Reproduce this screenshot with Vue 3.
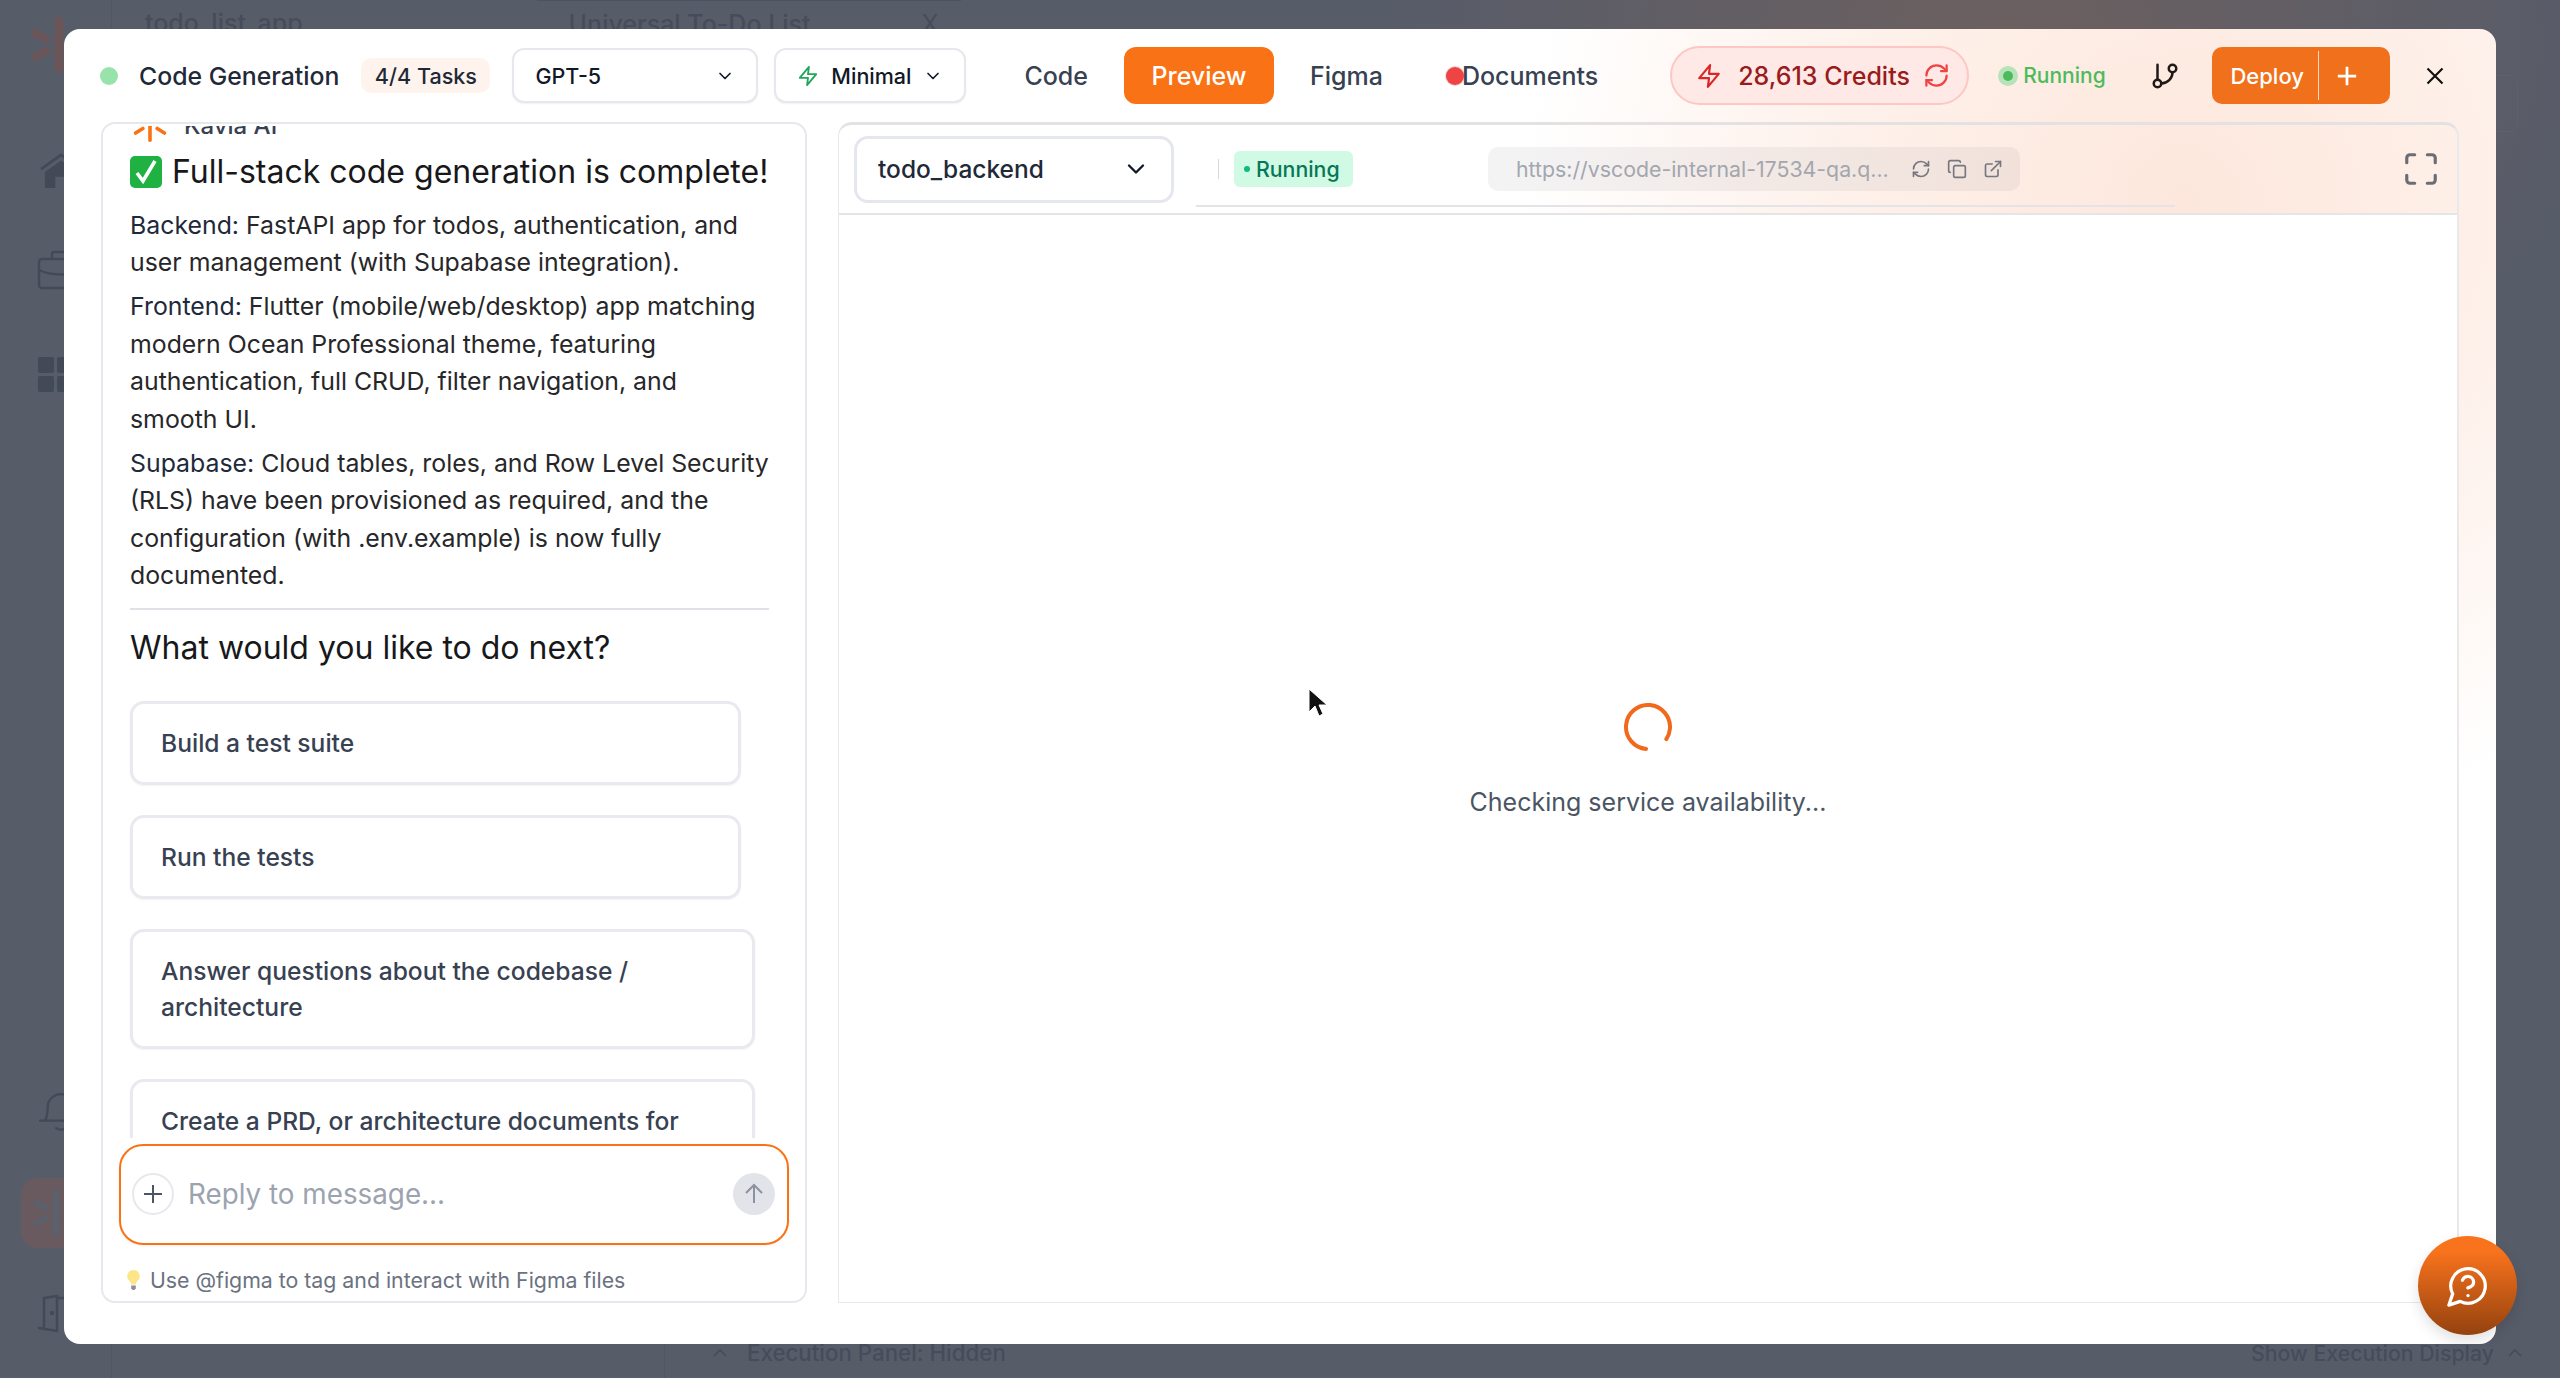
<template>
  <div class="page">
    <!-- app behind the dialog, mostly hidden -->
    <aside class="sidebar">
      <svg class="side-logo" viewBox="0 0 56 56" fill="none" stroke="#6a5659" stroke-linecap="round">
        <path d="M28 4v48" stroke-width="9" />
        <path d="M4 16l11 6M4 40l11-6M52 16l-11 6M52 40l-11-6" stroke-width="8" />
      </svg>
      <svg class="side-ico ico-home" viewBox="0 0 46 38" fill="none" stroke="#434a57" stroke-width="3">
        <path d="M2 17 23 2l21 15" />
        <path d="M6 20 23 8l17 12v15a2 2 0 0 1-2 2h-9V25H17v12H8a2 2 0 0 1-2-2z" fill="#434a57" stroke="none" />
      </svg>
      <svg class="side-ico ico-case" viewBox="0 0 48 40" fill="none" stroke="#434a57" stroke-width="2.5">
        <rect x="2" y="9" width="44" height="29" rx="3" />
        <path d="M15 9V4a2 2 0 0 1 2-2h14a2 2 0 0 1 2 2v5M2 20c12 6 32 6 44 0" />
      </svg>
      <div class="side-grid"><i></i><i></i><i></i><i></i></div>
      <svg class="side-ico ico-bell" viewBox="0 0 48 42" fill="none" stroke="#434a57" stroke-width="2.5" stroke-linecap="round">
        <path d="M2 29h44M7 29c3-4 3-8 3-14a14 14 0 0 1 28 0c0 6 0 10 3 14M19 37c3 2 7 2 10 0" />
      </svg>
      <div class="side-active">
        <svg viewBox="0 0 56 56" fill="none" stroke="#5a606c" stroke-linecap="round">
          <path d="M28 6v44" stroke-width="7" />
          <path d="M7 17l10 6M7 39l10-6M49 17l-10 6M49 39l-10-6" stroke-width="6" />
        </svg>
      </div>
      <svg class="side-ico ico-door" viewBox="0 0 48 40" fill="none" stroke="#434a57" stroke-width="2.5" stroke-linecap="round">
        <path d="M2 34l18 3V2L7 4v30M20 4h12v30M32 34h14" />
        <circle cx="15" cy="19" r="1" />
      </svg>
    </aside>

    <main class="behind">
      <div class="behind-top">
        <span class="behind-app">todo_list_app</span>
        <div class="behind-tab">
          <span>Universal To-Do List</span>
          <span class="behind-x">X</span>
        </div>
        <div class="behind-ghost"></div>
      </div>
      <div class="behind-bottom">
        <div class="exec-left">
          <svg class="caret" viewBox="0 0 14 8" fill="none" stroke="#454b58" stroke-width="1.6"><path d="M1 7l6-6 6 6" /></svg>
          <span>Execution Panel: Hidden</span>
        </div>
        <div class="exec-right">
          <span>Show Execution Display</span>
          <svg class="caret" viewBox="0 0 14 8" fill="none" stroke="#454b58" stroke-width="1.6"><path d="M1 7l6-6 6 6" /></svg>
        </div>
      </div>
    </main>

    <!-- dialog -->
    <div class="overlay">
      <section class="modal">
        <header class="modal-head">
          <span class="status-dot"></span>
          <span class="head-title">Code Generation</span>
          <span class="tasks">4/4 Tasks</span>
          <button type="button" class="pick pick-model">
            <span>GPT-5</span>
            <svg class="chev" viewBox="0 0 24 24"><path d="M6 9l6 6 6-6" /></svg>
          </button>
          <button type="button" class="pick pick-mode">
            <svg class="zap-small" viewBox="0 0 24 24"><path d="M13 2 3 14h9l-1 8 10-12h-9l1-8z" /></svg>
            <span>Minimal</span>
            <svg class="chev" viewBox="0 0 24 24"><path d="M6 9l6 6 6-6" /></svg>
          </button>

          <nav class="tabs">
            <span class="tab">Code</span>
            <span class="tab active">Preview</span>
            <span class="tab">Figma</span>
            <span class="tab tab-docs"><i class="docs-dot"></i>Documents</span>
          </nav>

          <div class="credits">
            <svg class="zap" viewBox="0 0 24 24"><path d="M13 2 3 14h9l-1 8 10-12h-9l1-8z" /></svg>
            <span>28,613 Credits</span>
            <svg class="refresh" viewBox="0 0 24 24">
              <path d="M3 12a9 9 0 0 1 9-9 9.75 9.75 0 0 1 6.74 2.74L21 8" />
              <path d="M21 3v5h-5" />
              <path d="M21 12a9 9 0 0 1-9 9 9.75 9.75 0 0 1-6.74-2.74L3 16" />
              <path d="M8 16H3v5" />
            </svg>
          </div>
          <div class="run-state"><i></i><span>Running</span></div>
          <svg class="branch" viewBox="0 0 24 24">
            <path d="M6 3v12" />
            <circle cx="18" cy="6" r="3" />
            <circle cx="6" cy="18" r="3" />
            <path d="M18 9a9 9 0 0 1-9 9" />
          </svg>
          <div class="deploy">
            <span class="deploy-label">Deploy</span>
            <span class="deploy-plus">
              <svg viewBox="0 0 24 24"><path d="M12 2v20M2 12h20" /></svg>
            </span>
          </div>
          <svg class="close" viewBox="0 0 24 24"><path d="M3 3l18 18M21 3 3 21" /></svg>
        </header>

        <div class="modal-body">
          <div class="chat">
            <div class="chat-scroll">
              <div class="msg-head">
                <svg class="kavia-logo" viewBox="0 0 40 40" fill="none" stroke="#f97316" stroke-linecap="round">
                  <path d="M20 4v34" stroke-width="4" />
                  <path d="M4 12l8 5M4 30l8-5M36 12l-8 5M36 30l-8-5" stroke-width="4" />
                </svg>
                <span>Kavia AI</span>
              </div>
              <h2 class="msg-title">
                <svg class="check" viewBox="0 0 32 32">
                  <rect x="0" y="0" width="32" height="32" rx="5" fill="#1fb141" />
                  <path d="M7 17l6 8L25 5" fill="none" stroke="#fff" stroke-width="3.6" />
                </svg>
                Full-stack code generation is complete!
              </h2>
              <p v-for="p in summary" :key="p.lead" class="msg-text"><span class="lead">{{ p.lead }}</span> {{ p.text }}</p>
              <hr class="rule" />
              <h3 class="next">What would you like to do next?</h3>
              <div class="options">
                <button
                  v-for="o in options"
                  :key="o.label"
                  type="button"
                  class="option"
                  :class="{ wide: o.wide }"
                >{{ o.label }}</button>
              </div>
            </div>

            <div class="reply">
              <span class="reply-add">
                <svg viewBox="0 0 24 24"><path d="M12 3v18M3 12h18" /></svg>
              </span>
              <span class="reply-holder">Reply to message...</span>
              <span class="reply-send">
                <svg viewBox="0 0 24 24"><path d="M12 21V3M4 11l8-8 8 8" /></svg>
              </span>
            </div>
            <div class="hint">
              <svg class="bulb" viewBox="0 0 16 24">
                <path d="M8 1a7 7 0 0 0-4 12.6c.9.8 1.2 1.8 1.3 3.4h5.4c.1-1.6.4-2.6 1.3-3.4A7 7 0 0 0 8 1z" fill="#fde68a" />
                <path d="M5.5 18h5v3l-1.5 2H7l-1.5-2z" fill="#8b8f98" />
              </svg>
              <span>Use @figma to tag and interact with Figma files</span>
            </div>
          </div>

          <div class="preview">
            <div class="preview-bar">
              <button type="button" class="service">
                <span>todo_backend</span>
                <svg class="chev chev-big" viewBox="0 0 24 24"><path d="M6 9l6 6 6-6" /></svg>
              </button>
              <div class="strip">
                <i class="strip-sep"></i>
                <span class="badge"><i></i>Running</span>
                <div class="url">
                  <span class="url-text">https://vscode-internal-17534-qa.q...</span>
                  <svg class="url-ico" viewBox="0 0 24 24">
                    <path d="M3 12a9 9 0 0 1 9-9 9.75 9.75 0 0 1 6.74 2.74L21 8" />
                    <path d="M21 3v5h-5" />
                    <path d="M21 12a9 9 0 0 1-9 9 9.75 9.75 0 0 1-6.74-2.74L3 16" />
                    <path d="M8 16H3v5" />
                  </svg>
                  <svg class="url-ico" viewBox="0 0 24 24">
                    <rect x="8" y="8" width="14" height="14" rx="2" />
                    <path d="M4 16a2 2 0 0 1-2-2V4a2 2 0 0 1 2-2h10a2 2 0 0 1 2 2" />
                  </svg>
                  <svg class="url-ico" viewBox="0 0 24 24">
                    <path d="M15 3h6v6" />
                    <path d="M10 14 21 3" />
                    <path d="M18 13v6a2 2 0 0 1-2 2H5a2 2 0 0 1-2-2V8a2 2 0 0 1 2-2h6" />
                  </svg>
                </div>
              </div>
              <svg class="fullscreen" viewBox="0 0 24 24">
                <path d="M8 3H5a2 2 0 0 0-2 2v3" />
                <path d="M21 8V5a2 2 0 0 0-2-2h-3" />
                <path d="M3 16v3a2 2 0 0 0 2 2h3" />
                <path d="M16 21h3a2 2 0 0 0 2-2v-3" />
              </svg>
            </div>
            <div class="preview-body">
              <svg class="spinner" viewBox="0 0 48 48">
                <circle cx="24" cy="24" r="22" pathLength="100" stroke-dasharray="83 17" transform="rotate(95 24 24)" />
              </svg>
              <p class="checking">Checking service availability...</p>
            </div>
          </div>
        </div>
      </section>
    </div>

    <button type="button" class="help" aria-label="Help">
      <svg viewBox="0 0 24 24">
        <path d="M7.9 20A9 9 0 1 0 4 16.1L2 22Z" />
        <path d="M9.09 9a3 3 0 0 1 5.83 1c0 2-3 3-3 3" />
        <path d="M12 17h.01" />
      </svg>
    </button>

    <svg class="pointer" viewBox="0 0 20 30">
      <path d="M1 1v23l6-6 4 10 4-2-4-9h8z" fill="#111" stroke="#fff" stroke-width="1" />
    </svg>
  </div>
</template>

<script setup>
const summary = [
  {
    lead: 'Backend:',
    text: 'FastAPI app for todos, authentication, and user management (with Supabase integration).'
  },
  {
    lead: 'Frontend:',
    text: 'Flutter (mobile/web/desktop) app matching modern Ocean Professional theme, featuring authentication, full CRUD, filter navigation, and smooth UI.'
  },
  {
    lead: 'Supabase:',
    text: 'Cloud tables, roles, and Row Level Security (RLS) have been provisioned as required, and the configuration (with .env.example) is now fully documented.'
  }
]

const options = [
  { label: 'Build a test suite' },
  { label: 'Run the tests' },
  { label: 'Answer questions about the codebase / architecture', wide: true },
  { label: 'Create a PRD, or architecture documents for this project', wide: true }
]
</script>

<style>
html,
body {
  margin: 0;
  background: #565c69;
}
</style>

<style scoped>
.page {
  position: relative;
  display: flex;
  width: 2560px;
  height: 1378px;
  overflow: hidden;
  font-family: Inter, "Noto Sans", sans-serif;
  background: radial-gradient(ellipse 620px 420px at 2000px 40px, #6c6060 0%, rgba(108, 96, 96, 0) 100%), #575c69;
  color: #1f2937;
}

svg {
  display: block;
  flex: none;
}

button {
  font-family: inherit;
}

/* behind the dialog */
.sidebar {
  display: flex;
  flex-direction: column;
  width: 112px;
  height: 100%;
  border-right: 1px solid #515663;
  box-sizing: border-box;
  position: relative;
}

.side-logo {
  width: 56px;
  height: 56px;
  margin: 17px 0 0 31px;
}

.side-ico {
  width: 48px;
  margin-left: 37px;
}

.ico-home {
  height: 36px;
  margin-top: 80px;
}

.ico-case {
  height: 40px;
  margin-top: 61px;
}

.side-grid {
  display: grid;
  grid-template-columns: 16px 16px;
  gap: 3px;
  margin: 67px 0 0 38px;
}

.side-grid i {
  height: 16px;
  border-radius: 2px;
  background: #434a57;
}

.ico-bell {
  height: 40px;
  margin-top: 701px;
}

.side-active {
  display: flex;
  align-items: center;
  justify-content: center;
  width: 70px;
  height: 70px;
  margin: 45px 0 0 21px;
  border-radius: 16px;
  background: #685a5e;
}

.side-active svg {
  width: 52px;
  height: 52px;
}

.ico-door {
  height: 40px;
  margin-top: 46px;
}

.behind {
  display: flex;
  flex-direction: column;
  justify-content: space-between;
  flex: 1;
  color: #464c59;
  font-size: 25px;
  font-weight: 500;
}

.behind-top {
  display: flex;
  height: 130px;
  position: relative;
}

.behind-app {
  margin: 8px 0 0 33px;
  line-height: 30px;
}

.behind-tab {
  display: flex;
  align-items: flex-start;
  width: 424px;
  height: 40px;
  margin-left: 234px;
  padding: 8px 0 0 32px;
  line-height: 30px;
  box-sizing: border-box;
  border-top: 1px solid #4d525f;
}

.behind-x {
  margin-left: 111px;
  font-weight: 400;
}

.behind-ghost {
  position: absolute;
  left: 2360px;
  top: 75px;
  width: 44px;
  height: 55px;
  border: 1px solid #5d626e;
  border-radius: 8px;
}

.behind-bottom {
  display: flex;
  justify-content: space-between;
  height: 42px;
  line-height: 34px;
  font-size: 22.3px;
}

.exec-left,
.exec-right {
  display: flex;
  align-items: center;
  padding-bottom: 8px;
}

.exec-left {
  margin-left: 552px;
  padding-left: 48px;
  gap: 20px;
  border-left: 1px solid #515663;
}

.exec-right {
  gap: 14px;
  margin-right: 38px;
  font-size: 21.3px;
}

.caret {
  width: 14px;
  height: 8px;
}

/* dialog */
.overlay {
  position: absolute;
  inset: 0;
  display: flex;
  padding: 29px 64px 34px;
  box-sizing: border-box;
}

.modal {
  display: flex;
  flex-direction: column;
  flex: 1;
  border-radius: 16px;
  background:
    radial-gradient(ellipse 660px 640px at 2120px 170px, #fde7dc 0%, rgba(253, 231, 220, 0.55) 55%, rgba(253, 231, 220, 0) 100%),
    #fff;
}

.modal-head {
  display: flex;
  align-items: center;
  flex: none;
  height: 93px;
  padding-left: 36px;
  box-sizing: border-box;
  color: #1f2937;
}

.status-dot {
  flex: none;
  width: 18px;
  height: 18px;
  border-radius: 50%;
  background: #98e3ab;
}

.head-title {
  margin-left: 21px;
  font-size: 24.8px;
  font-weight: 500;
  white-space: nowrap;
}

.tasks {
  display: flex;
  align-items: center;
  justify-content: center;
  width: 129px;
  height: 35px;
  margin-left: 22px;
  border-radius: 10px;
  background: #fff4ed;
  font-size: 21.6px;
  font-weight: 500;
}

.pick {
  display: flex;
  align-items: center;
  justify-content: space-between;
  height: 55px;
  padding: 0 21px;
  box-sizing: border-box;
  border: 2px solid #e7e8ee;
  border-radius: 12px;
  background: #fff;
  box-shadow: 0 1px 2px rgba(0, 0, 0, 0.06);
  color: #111827;
  font-size: 21.5px;
  font-weight: 500;
}

.pick-model {
  width: 246px;
  margin-left: 22px;
}

.pick-mode {
  width: 192px;
  margin-left: 16px;
  padding: 0 21px 0 21px;
}

.chev {
  width: 20px;
  height: 20px;
  fill: none;
  stroke: #111827;
  stroke-width: 2;
  stroke-linecap: round;
  stroke-linejoin: round;
}

.chev-big {
  width: 28px;
  height: 28px;
}

.zap-small {
  width: 22px;
  height: 28px;
  fill: none;
  stroke: #22a559;
  stroke-width: 2;
  stroke-linejoin: round;
}

.tabs {
  display: flex;
  align-items: center;
  margin-left: 22px;
}

.tab {
  display: flex;
  align-items: center;
  height: 57px;
  padding: 0 36px;
  border-radius: 12px;
  color: #374151;
  font-size: 25px;
  font-weight: 500;
}

.tab.active {
  justify-content: center;
  width: 150px;
  padding: 0;
  box-sizing: border-box;
  background: #f97316;
  color: #fff;
}

.tab-docs {
  padding: 0 0 0 27px;
}

.docs-dot {
  flex: none;
  width: 18px;
  height: 18px;
  margin-right: -2px;
  border-radius: 50%;
  background: #ef4444;
  box-shadow: 0 0 0 1px rgba(239, 68, 68, 0.25);
}

.credits {
  display: flex;
  align-items: center;
  width: 299px;
  height: 59px;
  margin-left: 72px;
  padding-left: 24px;
  box-sizing: border-box;
  border: 2px solid #fdc7c3;
  border-radius: 30px;
  background: #fee9e6;
  color: #991b1b;
  font-size: 25px;
  font-weight: 500;
  white-space: nowrap;
}

.zap {
  width: 26px;
  height: 30px;
  margin-right: 16px;
  fill: none;
  stroke: #dc2626;
  stroke-width: 2;
  stroke-linejoin: round;
}

.refresh {
  width: 27px;
  height: 27px;
  margin-left: 13px;
  fill: none;
  stroke: #ef4444;
  stroke-width: 2;
  stroke-linecap: round;
  stroke-linejoin: round;
}

.run-state {
  display: flex;
  align-items: center;
  gap: 6px;
  margin-left: 29px;
  color: #4cbb5c;
  font-size: 21px;
  font-weight: 500;
}

.run-state i {
  width: 10px;
  height: 10px;
  margin: 0 4px 0 5px;
  border-radius: 50%;
  background: #4cbb5c;
  box-shadow: 0 0 0 5px #b7e2ba;
}

.branch {
  width: 30px;
  height: 30px;
  margin-left: 44px;
  fill: none;
  stroke: #1f1a17;
  stroke-width: 2;
  stroke-linecap: round;
}

.deploy {
  display: flex;
  align-items: stretch;
  width: 178px;
  height: 57px;
  margin-left: 32px;
  border-radius: 10px;
  background: #f1701c;
  color: #fff;
  font-size: 22px;
  font-weight: 500;
}

.deploy-label {
  display: flex;
  align-items: center;
  justify-content: center;
  width: 106px;
  padding-left: 5px;
  box-sizing: border-box;
}

.deploy-plus {
  display: flex;
  align-items: center;
  justify-content: center;
  flex: 1;
  margin: 4px 0;
  padding-right: 14px;
  border-left: 1px solid rgba(255, 255, 255, 0.75);
}

.deploy-plus svg {
  width: 22px;
  height: 22px;
  fill: none;
  stroke: #fff;
  stroke-width: 3;
}

.close {
  width: 20px;
  height: 20px;
  margin-left: 35px;
  fill: none;
  stroke: #111;
  stroke-width: 2.6;
}

.modal-body {
  display: flex;
  flex: 1;
  min-height: 0;
  gap: 31px;
  padding: 0 37px 41px;
}

/* chat column */
.chat {
  display: flex;
  flex-direction: column;
  flex: none;
  width: 706px;
  box-sizing: border-box;
  border: 2px solid #e7e8ee;
  border-radius: 14px;
  background: #fff;
}

.chat-scroll {
  height: 1012px;
  margin-top: 2px;
  padding: 0 36px 0 27px;
  overflow: hidden;
  flex: none;
  box-sizing: border-box;
}

.msg-head {
  display: flex;
  align-items: flex-end;
  gap: 16px;
  height: 16px;
  padding-left: 2px;
  font-size: 24px;
  line-height: 22px;
  font-weight: 500;
  color: #374151;
}

.kavia-logo {
  width: 36px;
  height: 36px;
}

.msg-head span {
  margin-bottom: 5px;
}

.msg-title {
  display: flex;
  align-items: center;
  gap: 10px;
  margin: 6.5px 0 12px;
  font-size: 32px;
  line-height: 46px;
  font-weight: 400;
  color: #18181b;
  white-space: nowrap;
}

.check {
  width: 32px;
  height: 32px;
}

.msg-text {
  margin: 0 0 6.5px;
  font-size: 24.85px;
  line-height: 37.5px;
  color: #27272a;
}

.lead {
  color: #1e293b;
}

.rule {
  height: 2px;
  margin: 13px 0 15px;
  border: 0;
  background: #e0e1e6;
}

.next {
  margin: 0 0 30px;
  font-size: 32px;
  line-height: 46px;
  font-weight: 400;
  color: #18181b;
}

.options {
  display: flex;
  flex-direction: column;
  align-items: flex-start;
  gap: 30px;
}

.option {
  width: 611px;
  padding: 21px 28px;
  box-sizing: border-box;
  border: 3px solid #e8eaef;
  border-radius: 14px;
  background: #fff;
  box-shadow: 0 1px 2px rgba(0, 0, 0, 0.05);
  color: #374151;
  font-size: 24.6px;
  line-height: 36px;
  font-weight: 500;
  text-align: left;
}

.option.wide {
  width: 625px;
}

.reply {
  display: flex;
  align-items: center;
  flex: none;
  height: 101px;
  margin: 5.5px 16px 0 16px;
  padding: 0 12px 0 11px;
  box-sizing: border-box;
  border: 2px solid #f97316;
  border-radius: 24px;
  background: #fff;
  box-shadow: 0 1px 3px rgba(0, 0, 0, 0.06);
}

.reply-add,
.reply-send {
  display: flex;
  align-items: center;
  justify-content: center;
  flex: none;
  width: 42px;
  height: 42px;
  border-radius: 50%;
  box-sizing: border-box;
}

.reply-add {
  border: 2px solid #e7e8ee;
}

.reply-add svg {
  width: 24px;
  height: 24px;
  fill: none;
  stroke: #4b5563;
  stroke-width: 2;
}

.reply-holder {
  flex: 1;
  margin-left: 14px;
  color: #9ca3af;
  font-size: 27.8px;
}

.reply-send {
  background: #e2e4e9;
}

.reply-send svg {
  width: 24px;
  height: 24px;
  fill: none;
  stroke: #8b92a0;
  stroke-width: 2;
}

.hint {
  display: flex;
  align-items: center;
  gap: 9px;
  margin: 22px 0 0 23px;
  color: #6b7280;
  font-size: 21.3px;
  line-height: 26px;
}

.bulb {
  width: 15px;
  height: 22px;
}

/* preview column */
.preview {
  display: flex;
  flex-direction: column;
  flex: 1;
  min-width: 0;
  box-sizing: border-box;
  border: 1px solid #e9e8ea;
  border-top: 3px solid #e4e1e3;
  border-right-width: 2px;
  border-radius: 14px 14px 0 0;
}

.preview-bar {
  display: flex;
  align-items: center;
  flex: none;
  height: 90px;
  padding-left: 15px;
  box-sizing: border-box;
  border-bottom: 2px solid #e5e4e7;
}

.service {
  display: flex;
  align-items: center;
  justify-content: space-between;
  flex: none;
  width: 320px;
  height: 67px;
  padding: 0 21px;
  box-sizing: border-box;
  border: 3px solid #e5e7ee;
  border-radius: 14px;
  background: #fff;
  color: #1f2937;
  font-size: 24.5px;
  font-weight: 500;
}

.strip {
  display: flex;
  align-items: center;
  flex: none;
  align-self: flex-end;
  width: 979px;
  height: 70px;
  margin: 0 0 6px 22px;
  padding: 0 0 5px 22px;
  box-sizing: border-box;
  border-bottom: 2px solid #e3e3e8;
}

.strip-sep {
  width: 1px;
  height: 20px;
  background: #d5d7dc;
}

.badge {
  display: flex;
  align-items: center;
  gap: 6px;
  width: 119px;
  height: 36px;
  margin-left: 15px;
  padding-left: 10px;
  box-sizing: border-box;
  border-radius: 6px;
  background: #d1fae5;
  color: #047857;
  font-size: 21.3px;
  font-weight: 500;
}

.badge i {
  width: 6px;
  height: 6px;
  border-radius: 50%;
  background: #10b981;
}

.url {
  display: flex;
  align-items: center;
  width: 532px;
  height: 44px;
  margin-left: 135px;
  padding-left: 28px;
  box-sizing: border-box;
  border-radius: 10px;
  background: rgba(120, 120, 130, 0.09);
}

.url-text {
  width: 395px;
  color: #a3a6ae;
  font-size: 21.3px;
  white-space: nowrap;
}

.url-ico {
  width: 20px;
  height: 20px;
  margin-right: 16px;
  fill: none;
  stroke: #77787f;
  stroke-width: 2;
  stroke-linecap: round;
  stroke-linejoin: round;
}

.fullscreen {
  width: 38px;
  height: 38px;
  margin-left: auto;
  margin-right: 17px;
  fill: none;
  stroke: #6b6d75;
  stroke-width: 2;
  stroke-linecap: round;
}

.preview-body {
  display: flex;
  flex-direction: column;
  align-items: center;
  justify-content: center;
  flex: 1;
  padding-top: 4px;
  background: #fff;
}

.spinner {
  width: 48px;
  height: 48px;
  fill: none;
  stroke: #f0691c;
  stroke-width: 4;
  stroke-linecap: round;
}

.checking {
  margin: 34px 0 0;
  color: #4b5563;
  font-size: 25px;
  line-height: 34px;
}

/* things floating over the dialog */
.help {
  position: absolute;
  left: 2418px;
  top: 1236px;
  display: flex;
  align-items: center;
  justify-content: center;
  width: 99px;
  height: 99px;
  padding: 0;
  border: 0;
  border-radius: 50%;
  background: linear-gradient(180deg, #f9731d 15%, #94420f 100%);
  box-shadow: 0 6px 14px rgba(0, 0, 0, 0.12);
}

.help svg {
  width: 46px;
  height: 46px;
  fill: none;
  stroke: #fff;
  stroke-width: 1.7;
  stroke-linecap: round;
  stroke-linejoin: round;
}

.pointer {
  position: absolute;
  left: 1308px;
  top: 688px;
  width: 20px;
  height: 30px;
}
</style>
